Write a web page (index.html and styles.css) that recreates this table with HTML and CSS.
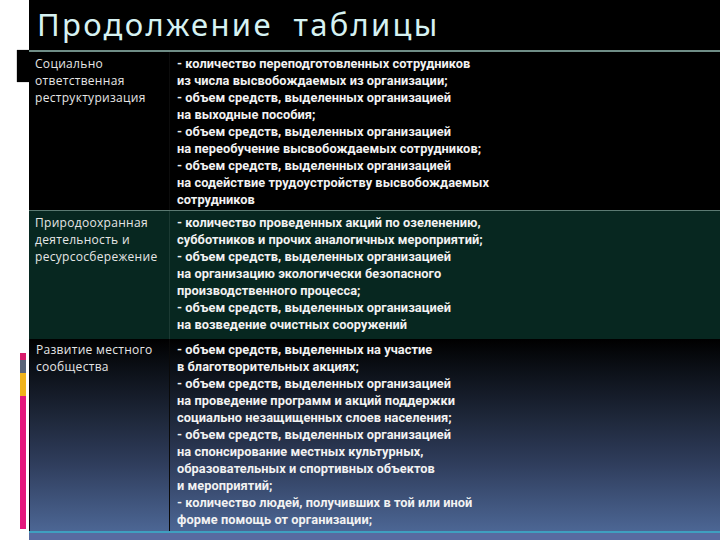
FILE: index.html
```html
<!DOCTYPE html>
<html lang="ru">
<head>
<meta charset="utf-8">
<title>Продолжение таблицы</title>
<link rel="stylesheet" href="styles.css">
</head>
<body>
<div class="page">
  <aside class="gutter">
    <div class="tab"></div>
    <div class="colorbar">
      <span class="seg seg-pink-top"></span>
      <span class="seg seg-gray"></span>
      <span class="seg seg-yellow"></span>
      <span class="seg seg-pink"></span>
    </div>
  </aside>
  <main class="slide">
    <header class="title-bar">
      <h1 class="title">Продолжение  таблицы</h1>
    </header>
    <div class="table">
      <div class="row row-1">
        <div class="cell name">Социально<br>ответственная<br>реструктуризация</div>
        <div class="cell desc">- количество переподготовленных сотрудников<br>из числа высвобождаемых из организации;<br>- объем средств, выделенных организацией<br>на выходные пособия;<br>- объем средств, выделенных организацией<br>на переобучение высвобождаемых сотрудников;<br>- объем средств, выделенных организацией<br>на содействие трудоустройству высвобождаемых<br>сотрудников</div>
      </div>
      <div class="row row-2">
        <div class="cell name">Природоохранная<br>деятельность и<br>ресурсосбережение</div>
        <div class="cell desc">- количество проведенных акций по озеленению,<br>субботников и прочих аналогичных мероприятий;<br>- объем средств, выделенных организацией<br>на организацию экологически безопасного<br>производственного процесса;<br>- объем средств, выделенных организацией<br>на возведение очистных сооружений</div>
      </div>
      <div class="row row-3">
        <div class="cell name">Развитие местного<br>сообщества</div>
        <div class="cell desc">- объем средств, выделенных на участие<br>в благотворительных акциях;<br>- объем средств, выделенных организацией<br>на проведение программ и акций поддержки<br>социально незащищенных слоев населения;<br>- объем средств, выделенных организацией<br>на спонсирование местных культурных,<br>образовательных и спортивных объектов<br>и мероприятий;<br>- количество людей, получивших в той или иной<br>форме помощь от организации;</div>
      </div>
    </div>
    <footer class="bottom-strip"></footer>
  </main>
</div>
</body>
</html>
```

FILE: styles.css
```css
html, body {
  margin: 0;
  padding: 0;
  background: #ffffff;
}

.page {
  display: flex;
  width: 720px;
  height: 540px;
  overflow: hidden;
}

.gutter {
  width: 29px;
  flex: none;
  display: flex;
  flex-direction: column;
  align-items: flex-end;
  background: #ffffff;
}

.tab {
  width: 12px;
  height: 32px;
  margin-top: 50px;
  background: #000000;
  box-shadow: -1px 0 0 #d8d8d8, 0 -1px 0 #e4e4e4, 0 1px 0 #e4e4e4;
}

.colorbar {
  width: 6px;
  margin-top: 271px;
  margin-right: 3px;
  display: flex;
  flex-direction: column;
}

.seg { display: block; width: 6px; }
.seg-pink-top { height: 7px; background: #d81c6c; }
.seg-gray { height: 13px; background: #5a6478; }
.seg-yellow { height: 23px; background: #f0b41c; }
.seg-pink { height: 133px; background: #e4187c; }

.slide {
  flex: 1;
  display: flex;
  flex-direction: column;
  background: #000000;
}

.title-bar {
  height: 50px;
  flex: none;
  background: #000000;
}

.title {
  margin: 0;
  padding: 4px 0 0 8px;
  font-family: "Noto Sans", sans-serif;
  font-weight: 400;
  font-size: 31px;
  line-height: 40px;
  letter-spacing: 2.3px;
  color: #d6f2f2;
  white-space: pre;
}

.table {
  display: flex;
  flex-direction: column;
}

.row {
  display: grid;
  grid-template-columns: 140px 1fr;
}

.row-1 {
  height: 158px;
  border-top: 2px solid #6f8d86;
  background: #000000;
}

.row-2 {
  height: 128px;
  border-top: 1px solid #5b7a72;
  background: #072720;
}

.row-3 {
  height: 192px;
  background: linear-gradient(180deg, #000000 0%, #0b0f16 15%, #1d2638 40%, #2f3d5c 65%, #4c6694 100%);
}

.cell {
  padding-top: 3px;
  line-height: 17px;
  color: #f2f2f2;
}

.row-3 .cell { padding-top: 2px; }

.name {
  padding-left: 6px;
  font-family: "Open Sans", sans-serif;
  font-weight: 400;
  font-size: 12px;
  letter-spacing: 0.3px;
  color: #e6e6e6;
}

.desc {
  padding-left: 7px;
  font-family: "Roboto", sans-serif;
  font-weight: 700;
  font-size: 12.8px;
  letter-spacing: 0.05px;
}

.row-1 .desc { border-left: 1px solid #0c0c0c; }
.row-2 .desc { border-left: 1px solid #1b3a33; }
.row-3 .name { border-left: 1px solid #05070a; }
.row-3 .desc { border-left: 1px solid #0a0a0a; }

.bottom-strip {
  flex: 1;
  border-top: 2px solid #3f9fc0;
  background: #586aa0;
}
```
